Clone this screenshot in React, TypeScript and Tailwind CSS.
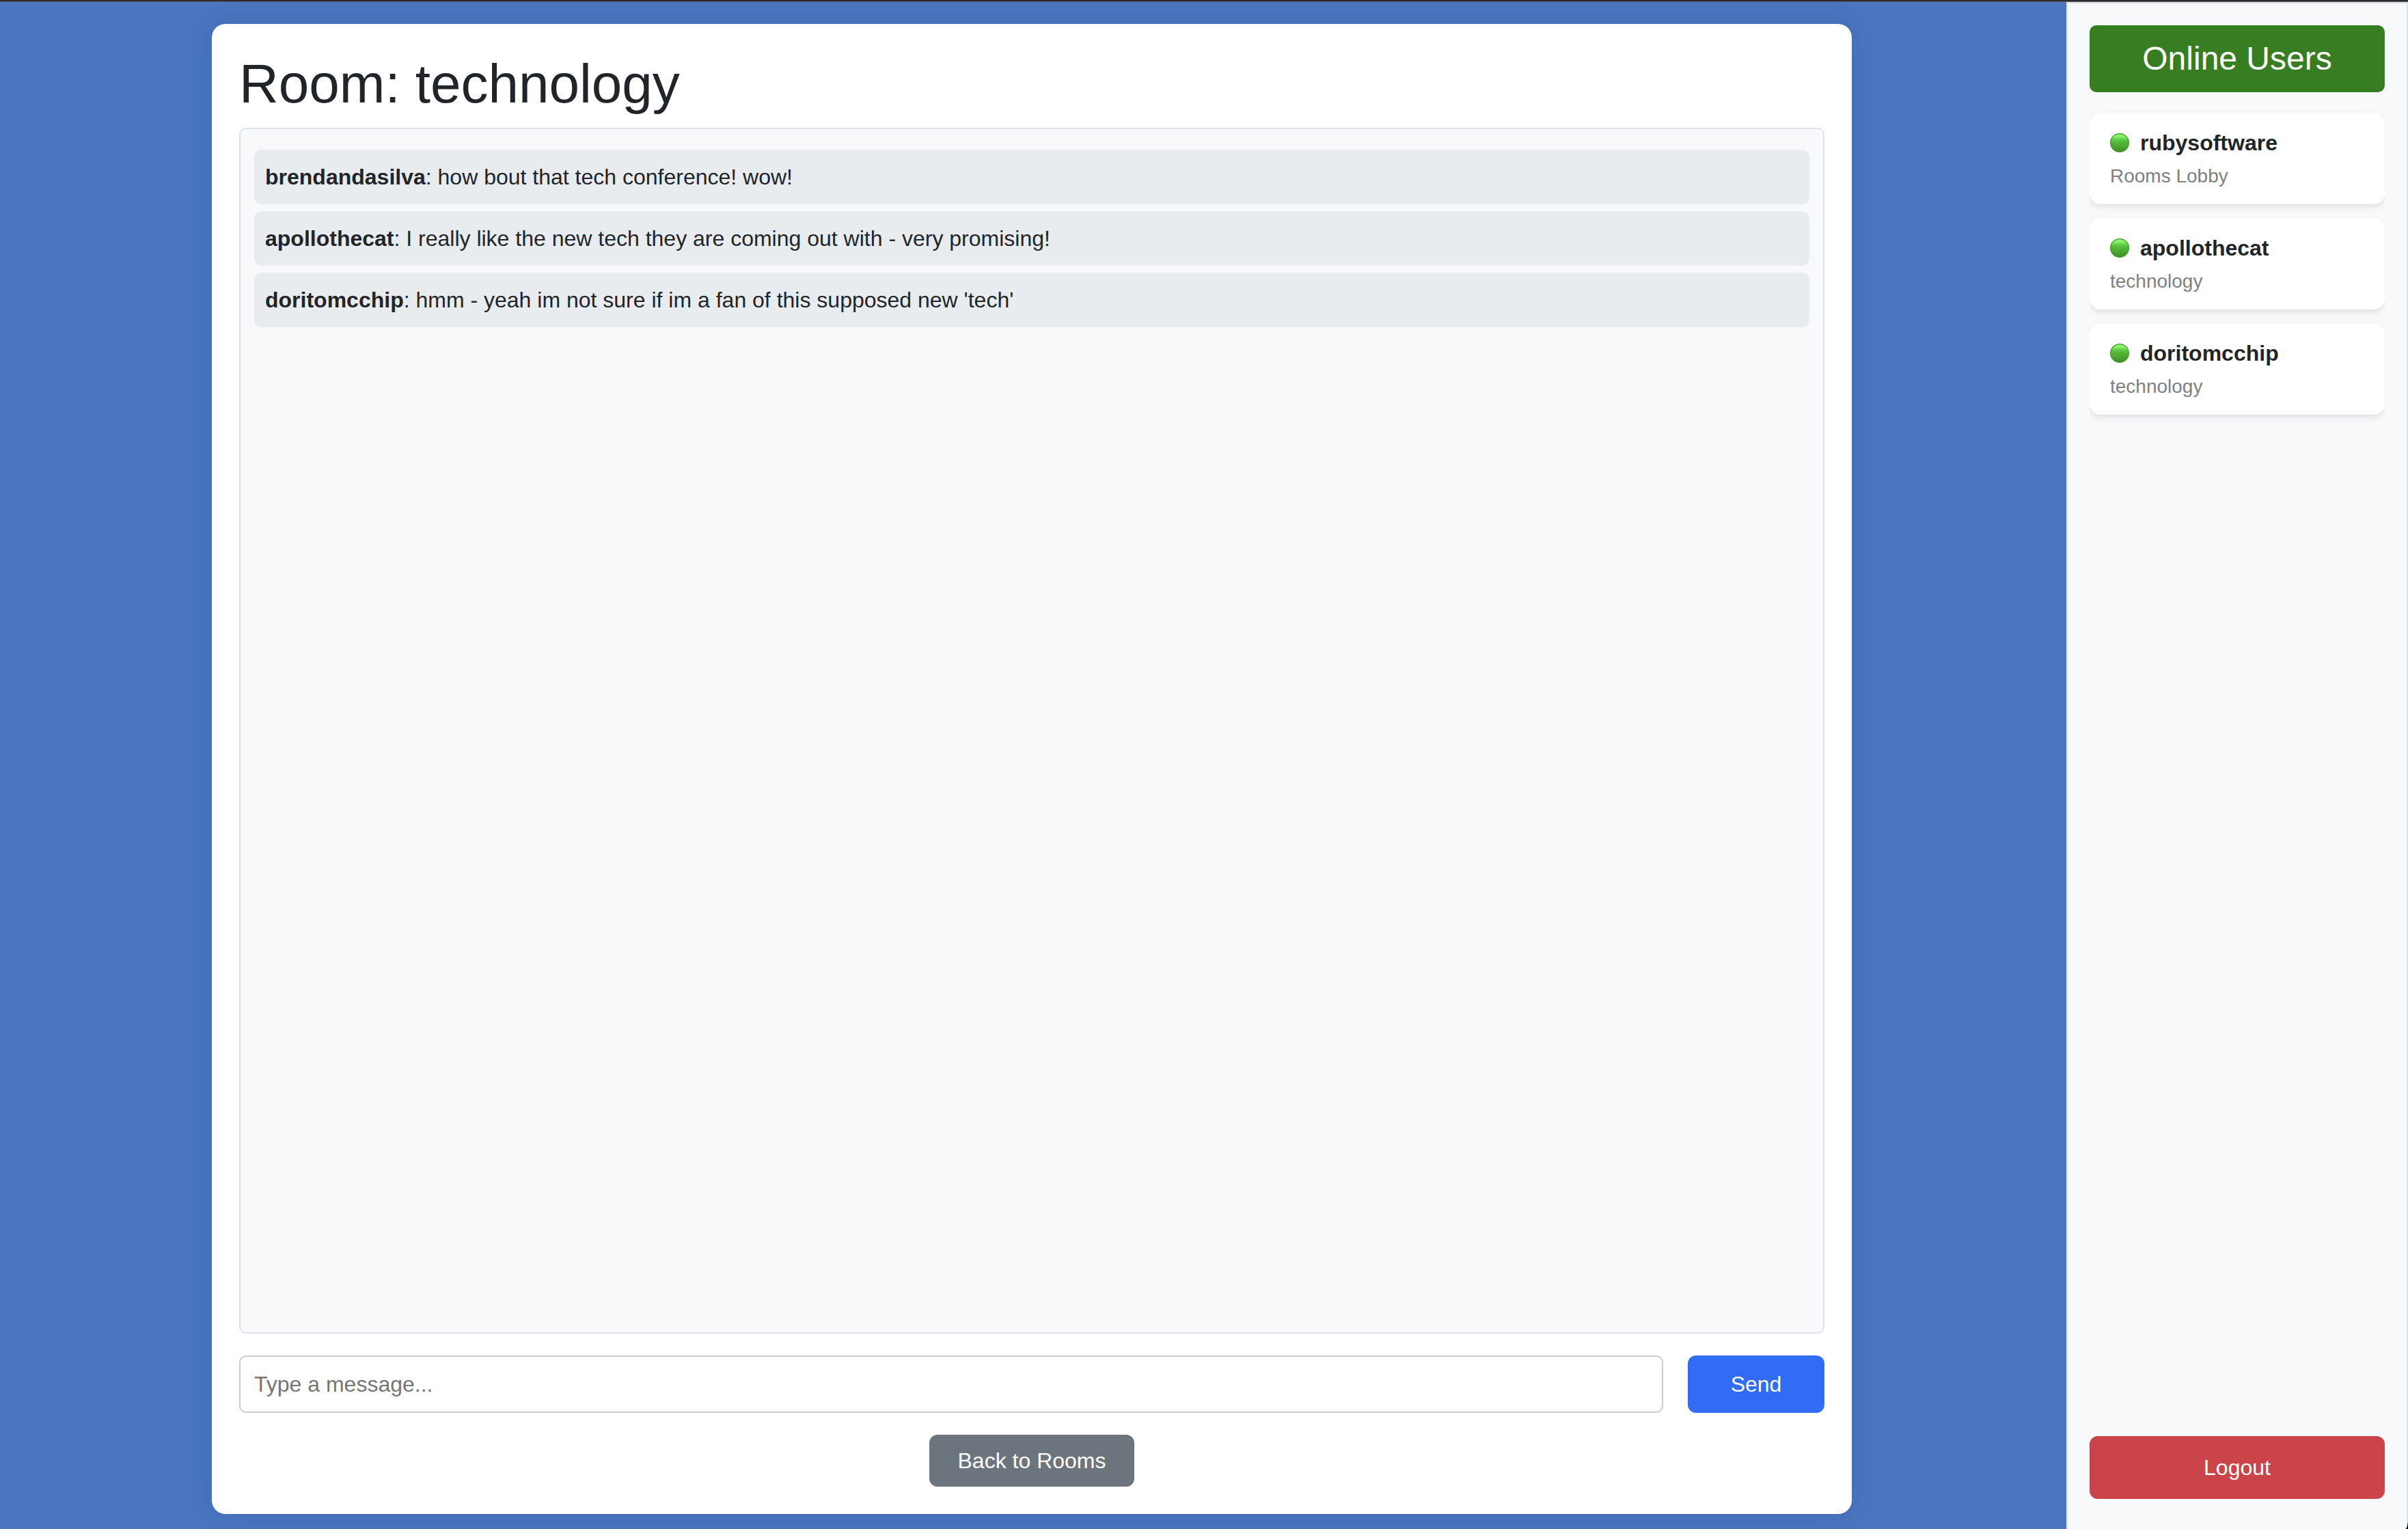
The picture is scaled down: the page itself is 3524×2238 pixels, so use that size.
const messages = [
  { user: "brendandasilva", text: "how bout that tech conference! wow!" },
  { user: "apollothecat", text: "I really like the new tech they are coming out with - very promising!" },
  { user: "doritomcchip", text: "hmm - yeah im not sure if im a fan of this supposed new 'tech'" },
];

const users = [
  { name: "rubysoftware", room: "Rooms Lobby" },
  { name: "apollothecat", room: "technology" },
  { name: "doritomcchip", room: "technology" },
];

function StatusDot() {
  return (
    <svg className="size-7 shrink-0" viewBox="0 0 28 28" aria-hidden="true">
      <defs>
        <linearGradient id="dot" x1="0" y1="0" x2="0" y2="1">
          <stop offset="0" stopColor="#8dfb72" />
          <stop offset="0.15" stopColor="#86f56a" />
          <stop offset="0.32" stopColor="#62cc46" />
          <stop offset="0.5" stopColor="#50b434" />
          <stop offset="0.72" stopColor="#4ba630" />
          <stop offset="1" stopColor="#3f8a28" />
        </linearGradient>
      </defs>
      <circle cx="14" cy="14" r="13.4" fill="url(#dot)" stroke="#439a2b" strokeWidth="1.2" />
    </svg>
  );
}

export default function App() {
  return (
    <div className="bg-black">
      <div className="flex h-screen flex-col overflow-hidden rounded-br-[4px_16px] bg-[#4a76c1] font-['Liberation_Sans',Arial,sans-serif] text-[32px] leading-[48px] text-[#212529]">
        <div className="h-[3px] shrink-0 border-b border-[#66635f] bg-[#2a2a32]" />
        <div className="flex min-h-0 flex-1">
          <main className="flex min-w-0 flex-1 justify-center pt-8 pr-9 pb-[22px] pl-8">
            <section className="flex w-full max-w-[2400px] flex-col rounded-[20px] bg-white p-10 shadow-[0_0_40px_rgba(0,0,0,0.1)]">
              <h1 className="mb-4 text-[80px] leading-[96px]">Room: technology</h1>
              <ul className="flex min-h-0 flex-1 flex-col gap-[10px] overflow-y-auto rounded-[10px] border-2 border-[#dee2e6] bg-[#f8f9fa] px-5 py-[30px]">
                {messages.map((m) => (
                  <li key={m.user} className="rounded-[10px] bg-[#e9ecef] p-4">
                    <strong>{m.user}</strong>: {m.text}
                  </li>
                ))}
              </ul>
              <form className="mt-8 flex h-[84px] gap-9" onSubmit={(e) => e.preventDefault()}>
                <input
                  type="text"
                  aria-label="Message"
                  placeholder="Type a message..."
                  className="min-w-0 flex-1 rounded-[10px] border-2 border-[#cccccc] bg-white px-5 placeholder:text-[#757575]"
                />
                <button type="submit" className="w-[200px] rounded-xl bg-[#316cf4] text-white">
                  Send
                </button>
              </form>
              <button type="button" className="mt-8 h-[76px] w-[300px] self-center rounded-xl bg-[#6c757d] text-white">
                Back to Rooms
              </button>
            </section>
          </main>
          <aside className="flex w-[500px] shrink-0 flex-col border-2 border-b-0 border-[#dee2e6] bg-[#f8f9fa] px-8 pt-8 pb-11">
            <h2 className="rounded-[10px] bg-[#377d22] py-5 text-center text-[48px] leading-[58px] text-white">
              Online Users
            </h2>
            <ul className="flex min-h-0 flex-1 flex-col gap-5 overflow-hidden pt-[30px]">
              {users.map((u) => (
                <li key={u.name} className="rounded-2xl bg-white px-[30px] py-5 shadow-[0_4px_10px_rgba(0,0,0,0.1)]">
                  <div className="flex items-center gap-4">
                    <StatusDot />
                    <strong>{u.name}</strong>
                  </div>
                  <div className="mt-1 text-[28px] leading-[42px] text-[#808080]">{u.room}</div>
                </li>
              ))}
            </ul>
            <button type="button" className="h-[92px] shrink-0 rounded-xl bg-[#cb444a] text-white">
              Logout
            </button>
          </aside>
        </div>
      </div>
    </div>
  );
}
